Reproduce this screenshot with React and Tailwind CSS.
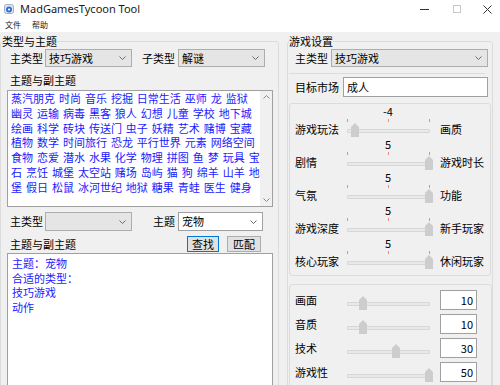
import React from 'react';

const themeLines = [
  '蒸汽朋克 时尚 音乐 挖掘 日常生活 巫师 龙 监狱',
  '幽灵 运输 病毒 黑客 狼人 幻想 儿童 学校 地下城',
  '绘画 科学 砖块 传送门 虫子 妖精 艺术 赌博 宝藏',
  '植物 数学 时间旅行 恐龙 平行世界 元素 网络空间',
  '食物 恋爱 潜水 水果 化学 物理 拼图 鱼 梦 玩具 宝',
  '石 烹饪 城堡 太空站 赌场 岛屿 猫 狗 绵羊 山羊 地',
  '堡 假日 松鼠 冰河世纪 地狱 糖果 青蛙 医生 健身',
];

const resultLines = ['主题：宠物', '合适的类型：', '技巧游戏', '动作'];

const focusRows = [
  { left: '游戏玩法', right: '画质', value: -4 },
  { left: '剧情', right: '游戏时长', value: 5 },
  { left: '气氛', right: '功能', value: 5 },
  { left: '游戏深度', right: '新手玩家', value: 5 },
  { left: '核心玩家', right: '休闲玩家', value: 5 },
];

const weightRows = [
  { label: '画面', value: 10 },
  { label: '音质', value: 10 },
  { label: '技术', value: 30 },
  { label: '游戏性', value: 50 },
];

function Chevron() {
  return (
    <svg width="7" height="4" viewBox="0 0 7 4" className="shrink-0">
      <path d="M0.5 0.5 L3.5 3.5 L6.5 0.5" fill="none" stroke="#6a6a6a" strokeWidth="1" />
    </svg>
  );
}

function Thumb({ left, top }) {
  return (
    <svg
      width="8"
      height="14"
      viewBox="0 0 8 14"
      className="absolute"
      style={{ left, top }}
    >
      <polygon points="0,4 4,0 8,4 8,14 0,14" fill="#cdcdcd" />
    </svg>
  );
}

// frac: 0..1 along the track
function Trackbar({ frac, value, ticks }) {
  const thumbLeft = Math.round(4 + frac * 82 - 4);
  if (ticks) {
    return (
      <div className="relative w-[90px] h-[33px] shrink-0">
        <div className="text-center leading-[13px]">{value}</div>
        <div className="absolute top-[14px] left-[4px] w-px h-[3px] bg-[#ec8a8a]" />
        <div className="absolute top-[14px] left-[45px] w-px h-[3px] bg-[#ec8a8a]" />
        <div className="absolute top-[14px] left-[86px] w-px h-[3px] bg-[#ec8a8a]" />
        <div className="absolute top-[24px] left-[4px] w-[83px] h-[4px] rounded-[1px] border border-[#d6d6d6] bg-[#e7eaea]" />
        <Thumb left={thumbLeft} top={18} />
      </div>
    );
  }
  return (
    <div className="relative w-[90px] h-[20px] shrink-0">
      <div className="absolute top-[12px] left-[4px] w-[83px] h-[4px] rounded-[1px] border border-[#d6d6d6] bg-[#e7eaea]" />
      <Thumb left={thumbLeft} top={6} />
    </div>
  );
}

// content fits, so the bar shows only its arrows
function Scrollbar() {
  return (
    <div className="w-[12px] shrink-0 bg-[#f0f0f0] flex flex-col justify-between">
      <div className="h-[12px] flex items-center justify-center">
        <svg width="7" height="4" viewBox="0 0 7 4">
          <path d="M0.5 3.5 L3.5 0.5 L6.5 3.5" fill="none" stroke="#8a8a8a" strokeWidth="1" />
        </svg>
      </div>
      <div className="h-[12px] flex items-center justify-center">
        <svg width="7" height="4" viewBox="0 0 7 4">
          <path d="M0.5 0.5 L3.5 3.5 L6.5 0.5" fill="none" stroke="#8a8a8a" strokeWidth="1" />
        </svg>
      </div>
    </div>
  );
}

function AppIcon() {
  return (
    <svg width="10" height="10" viewBox="0 0 10 10">
      <rect x="0.5" y="0.5" width="9" height="9" rx="2" fill="#dfe6ee" stroke="#9fb0c4" strokeWidth="1" />
      <circle cx="5" cy="5.5" r="3" fill="#2f6fd0" />
      <circle cx="5" cy="5.5" r="1.1" fill="#ffffff" />
    </svg>
  );
}

export default function App() {
  return (
    <div className="w-[500px] h-[385px] overflow-hidden bg-white flex flex-col text-[11px] text-black font-['Noto_Sans_CJK_SC','Noto_Sans',sans-serif]">
      {/* title bar */}
      <div className="h-[18px] shrink-0 flex items-center">
        <div className="ml-[4px]">
          <AppIcon />
        </div>
        <span className="ml-[6px] text-[11px] leading-[12px] text-[#1a1a1a] font-['Noto_Sans',sans-serif]">
          MadGamesTycoon Tool
        </span>
        <div className="ml-auto flex items-center">
          <div className="w-[9px] h-px bg-[#333]" />
          <div className="ml-[24px] w-[8px] h-[8px] border border-[#c8c8c8]" />
          <svg width="9" height="9" viewBox="0 0 9 9" className="ml-[22px] mr-[8px]">
            <path d="M0.5 0.5 L8.5 8.5 M8.5 0.5 L0.5 8.5" stroke="#333" strokeWidth="1" />
          </svg>
        </div>
      </div>

      {/* menu */}
      <div className="h-[14px] shrink-0 flex items-center gap-[11px] pl-[5px] text-[8px] leading-[10px] text-[#222]">
        <span>文件</span>
        <span>帮助</span>
      </div>

      {/* body */}
      <div className="flex-1 bg-[#f0f0f0] flex items-start pt-[3px]">
        {/* left group */}
        <fieldset className="w-[279px] h-[400px] shrink-0 border border-[#dcdcdc] rounded-[3px]">
          <legend className="ml-[1px] leading-[13px]">类型与主题</legend>

          <div className="mt-[1px] flex items-center h-[18px]">
            <span className="ml-[9px] w-[33px]">主类型</span>
            <div className="ml-[2px] w-[87px] h-[18px] border border-[#adadad] bg-[#e5e5e5] flex items-center pl-[3px] pr-[5px]">
              <span className="flex-1">技巧游戏</span>
              <Chevron />
            </div>
            <span className="ml-[10px] w-[33px]">子类型</span>
            <div className="ml-[3px] w-[87px] h-[18px] border border-[#adadad] bg-[#e5e5e5] flex items-center pl-[3px] pr-[5px]">
              <span className="flex-1">解谜</span>
              <Chevron />
            </div>
          </div>

          <div className="mt-[7px] ml-[9px] leading-[13px]">主题与副主题</div>

          <div className="mt-[3px] ml-[6px] w-[266px] h-[117px] border border-[#a0a0a0] bg-white flex">
            <div className="flex-1 overflow-hidden pl-[3px] leading-[14.8px] text-[#1a1aff] [word-spacing:1.5px]">
              {themeLines.map((line) => (
                <div key={line} className="whitespace-nowrap">{line}</div>
              ))}
            </div>
            <Scrollbar />
          </div>

          <div className="mt-[5px] flex items-center h-[19px]">
            <span className="ml-[9px] w-[33px]">主类型</span>
            <div className="ml-[2px] w-[87px] h-[19px] border border-[#adadad] bg-[#e5e5e5] flex items-center justify-end pr-[5px]">
              <Chevron />
            </div>
            <span className="ml-[21px] w-[22px]">主题</span>
            <div className="ml-[3px] w-[85px] h-[19px] border border-[#a0a0a0] bg-white flex items-center pl-[3px] pr-[5px]">
              <span className="flex-1">宠物</span>
              <Chevron />
            </div>
          </div>

          <div className="mt-[5px] flex items-center h-[16px]">
            <span className="ml-[9px] w-[177px]">主题与副主题</span>
            <button className="w-[32px] h-[16px] border border-[#0078d7] bg-[#e1e1e1] leading-[14px]">查找</button>
            <button className="ml-[8px] w-[34px] h-[16px] border border-[#adadad] bg-[#e1e1e1] leading-[14px]">匹配</button>
          </div>

          <div className="mt-[1px] ml-[6px] w-[266px] h-[200px] border border-[#a0a0a0] bg-white pl-[4px] pt-[2px] leading-[14.7px] text-[#1a1aff]">
            {resultLines.map((line) => (
              <div key={line}>{line}</div>
            ))}
          </div>
        </fieldset>

        {/* right group */}
        <fieldset className="ml-[8px] w-[204px] h-[400px] shrink-0 border border-[#dcdcdc] rounded-[3px]">
          <legend className="ml-[1px] leading-[13px]">游戏设置</legend>

          <div className="mt-[1px] flex items-center h-[18px]">
            <span className="ml-[7px] w-[33px]">主类型</span>
            <div className="ml-[3px] w-[157px] h-[18px] border border-[#adadad] bg-[#e5e5e5] flex items-center pl-[3px] pr-[5px]">
              <span className="flex-1">技巧游戏</span>
              <Chevron />
            </div>
          </div>

          <div className="mt-[6px] ml-[1px] w-[196px] border-t border-[#dcdcdc]" />

          <div className="mt-[3px] flex items-center h-[20px]">
            <span className="ml-[7px] w-[44px]">目标市场</span>
            <div className="ml-[4px] w-[145px] h-[20px] border border-[#a0a0a0] bg-white flex items-center pl-[3px]">
              成人
            </div>
          </div>

          <div className="mt-[6px] ml-[1px] w-[202px] h-[173px] border border-[#dcdcdc] rounded-[3px] pt-[1px] pl-[5px]">
            {focusRows.map((row) => (
              <div key={row.left} className="flex h-[33px]">
                <div className="w-[48px] pt-[17px] leading-[14px]">{row.left}</div>
                <Trackbar frac={(row.value + 5) / 10} value={row.value} ticks />
                <div className="ml-[7px] pt-[17px] leading-[14px]">{row.right}</div>
              </div>
            ))}
          </div>

          <div className="mt-[8px] ml-[1px] w-[203px] h-[120px] border border-[#dcdcdc] rounded-[3px] pt-[5px] pl-[5px]">
            {weightRows.map((row) => (
              <div key={row.label} className="flex h-[24px] items-start">
                <div className="w-[48px] leading-[20px]">{row.label}</div>
                <Trackbar frac={row.value / 50} />
                <div className="ml-[7px] w-[37px] h-[20px] border border-[#a0a0a0] bg-white text-right pr-[3px] leading-[18px]">
                  {row.value}
                </div>
              </div>
            ))}
          </div>
        </fieldset>
      </div>
    </div>
  );
}
